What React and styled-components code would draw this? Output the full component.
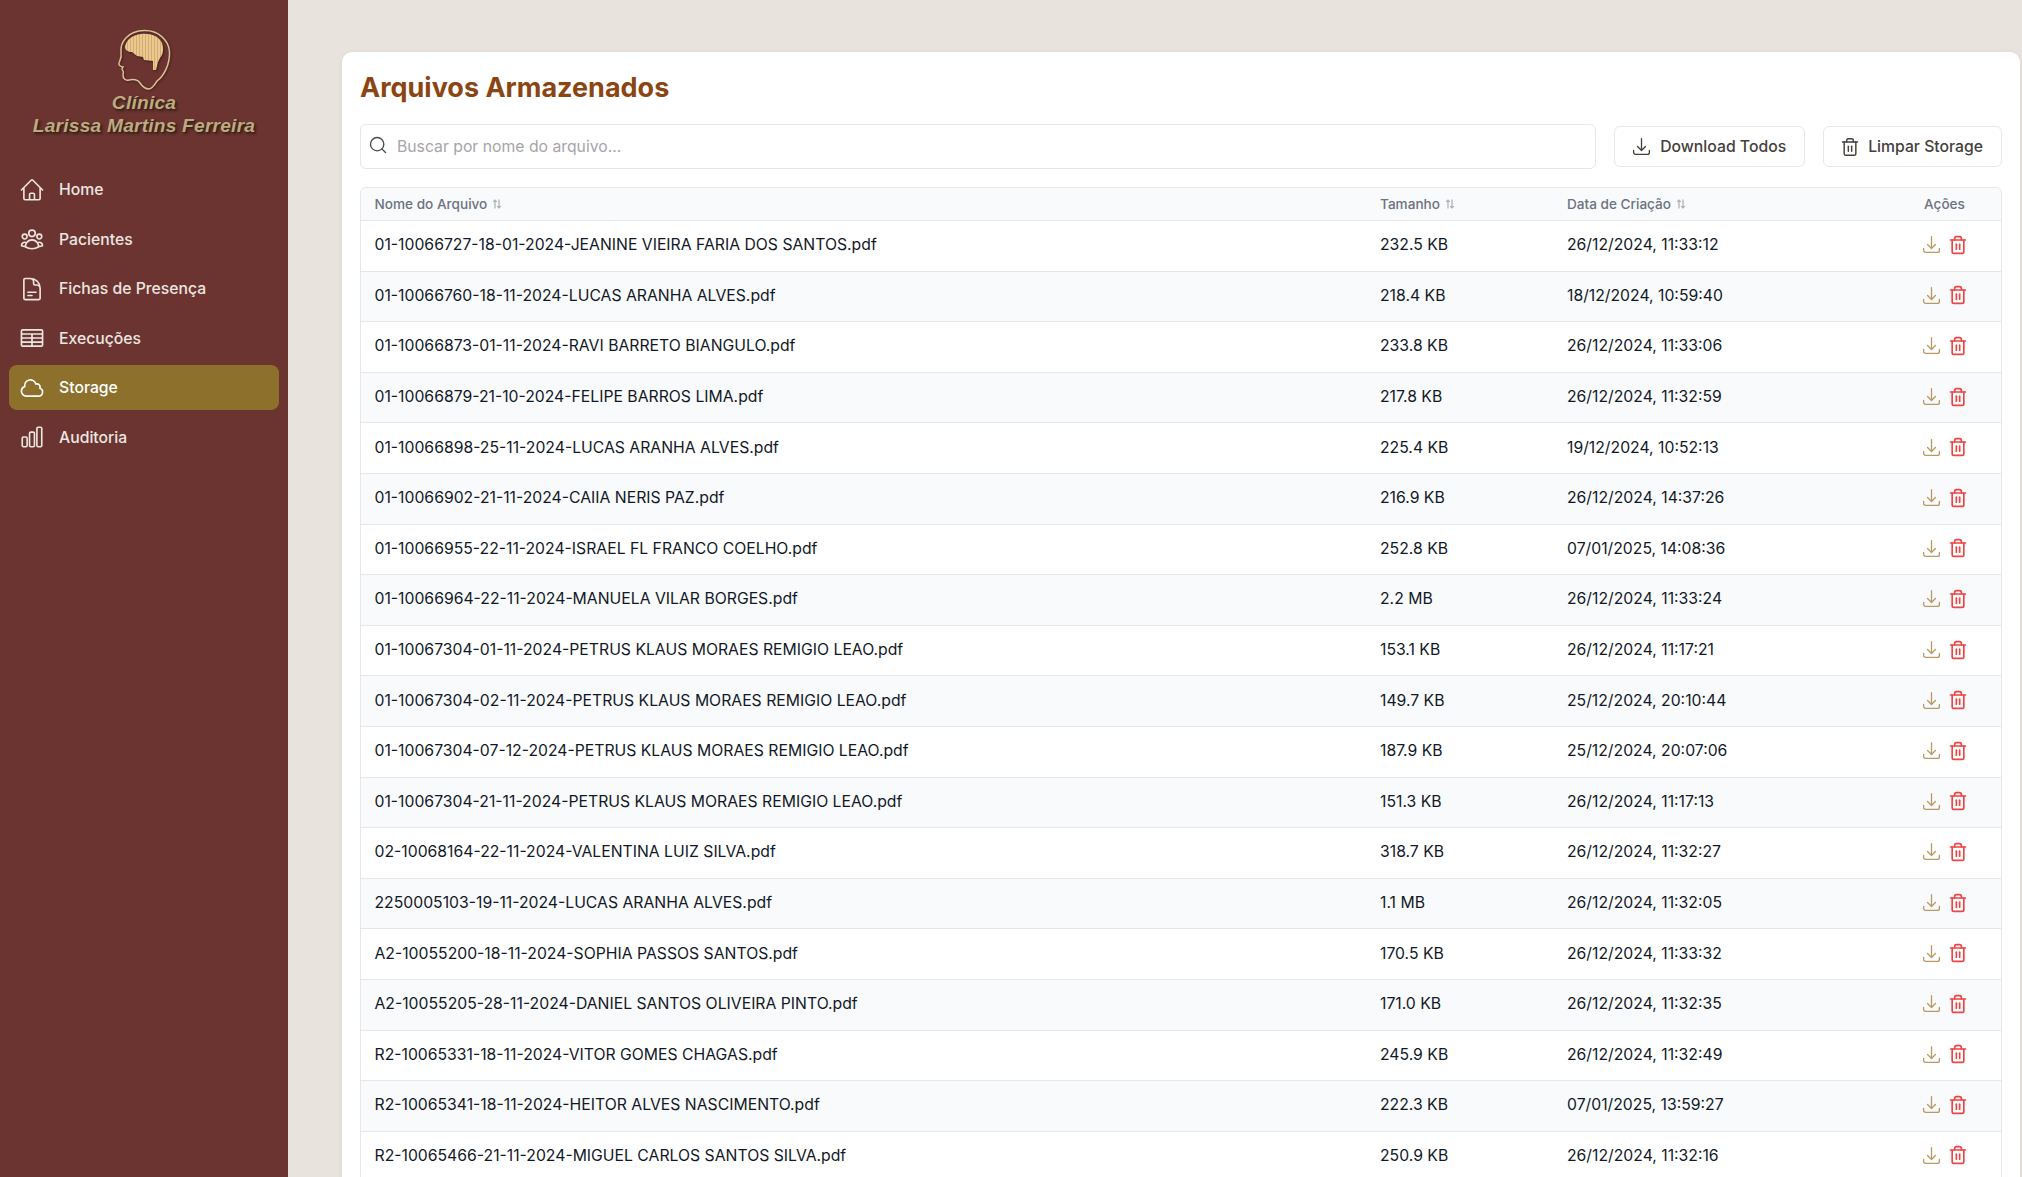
import React from 'react'
import styled, { createGlobalStyle } from 'styled-components'
import { Search, Trash2 } from 'lucide-react'
import {
  HiOutlineHome,
  HiOutlineUserGroup,
  HiOutlineDocumentText,
  HiOutlineTableCells,
  HiOutlineCloud,
  HiOutlineChartBar,
  HiOutlineArrowDownTray
} from 'react-icons/hi2'

const files = [
  ['01-10066727-18-01-2024-JEANINE VIEIRA FARIA DOS SANTOS.pdf', '232.5 KB', '26/12/2024, 11:33:12'],
  ['01-10066760-18-11-2024-LUCAS ARANHA ALVES.pdf', '218.4 KB', '18/12/2024, 10:59:40'],
  ['01-10066873-01-11-2024-RAVI BARRETO BIANGULO.pdf', '233.8 KB', '26/12/2024, 11:33:06'],
  ['01-10066879-21-10-2024-FELIPE BARROS LIMA.pdf', '217.8 KB', '26/12/2024, 11:32:59'],
  ['01-10066898-25-11-2024-LUCAS ARANHA ALVES.pdf', '225.4 KB', '19/12/2024, 10:52:13'],
  ['01-10066902-21-11-2024-CAIIA NERIS PAZ.pdf', '216.9 KB', '26/12/2024, 14:37:26'],
  ['01-10066955-22-11-2024-ISRAEL FL FRANCO COELHO.pdf', '252.8 KB', '07/01/2025, 14:08:36'],
  ['01-10066964-22-11-2024-MANUELA VILAR BORGES.pdf', '2.2 MB', '26/12/2024, 11:33:24'],
  ['01-10067304-01-11-2024-PETRUS KLAUS MORAES REMIGIO LEAO.pdf', '153.1 KB', '26/12/2024, 11:17:21'],
  ['01-10067304-02-11-2024-PETRUS KLAUS MORAES REMIGIO LEAO.pdf', '149.7 KB', '25/12/2024, 20:10:44'],
  ['01-10067304-07-12-2024-PETRUS KLAUS MORAES REMIGIO LEAO.pdf', '187.9 KB', '25/12/2024, 20:07:06'],
  ['01-10067304-21-11-2024-PETRUS KLAUS MORAES REMIGIO LEAO.pdf', '151.3 KB', '26/12/2024, 11:17:13'],
  ['02-10068164-22-11-2024-VALENTINA LUIZ SILVA.pdf', '318.7 KB', '26/12/2024, 11:32:27'],
  ['2250005103-19-11-2024-LUCAS ARANHA ALVES.pdf', '1.1 MB', '26/12/2024, 11:32:05'],
  ['A2-10055200-18-11-2024-SOPHIA PASSOS SANTOS.pdf', '170.5 KB', '26/12/2024, 11:33:32'],
  ['A2-10055205-28-11-2024-DANIEL SANTOS OLIVEIRA PINTO.pdf', '171.0 KB', '26/12/2024, 11:32:35'],
  ['R2-10065331-18-11-2024-VITOR GOMES CHAGAS.pdf', '245.9 KB', '26/12/2024, 11:32:49'],
  ['R2-10065341-18-11-2024-HEITOR ALVES NASCIMENTO.pdf', '222.3 KB', '07/01/2025, 13:59:27'],
  ['R2-10065466-21-11-2024-MIGUEL CARLOS SANTOS SILVA.pdf', '250.9 KB', '26/12/2024, 11:32:16']
]

const navItems = [
  { label: 'Home', Icon: HiOutlineHome },
  { label: 'Pacientes', Icon: HiOutlineUserGroup },
  { label: 'Fichas de Presença', Icon: HiOutlineDocumentText },
  { label: 'Execuções', Icon: HiOutlineTableCells },
  { label: 'Storage', Icon: HiOutlineCloud, active: true },
  { label: 'Auditoria', Icon: HiOutlineChartBar }
]

const GlobalStyle = createGlobalStyle`
  html, body {
    margin: 0;
    height: 100%;
    overflow: hidden;
    background: #e8e3dd;
    font-family: Inter, "Liberation Sans", sans-serif;
  }
  * { box-sizing: border-box; }
`

const Layout = styled.div`
  display: flex;
  height: 1177px;
  overflow: hidden;
`
const Sidebar = styled.aside`
  width: 288px;
  flex-shrink: 0;
  background: #6b3430;
  padding-top: 27px;
`
const LogoBlock = styled.div`
  display: flex;
  flex-direction: column;
  align-items: center;
  height: 115px;
`
const LogoMark = styled.svg`
  display: block;
  flex-shrink: 0;
  filter: drop-shadow(1px 1px 1px rgba(45, 20, 15, 0.7));
`
const LogoText = styled.div`
  font-family: "Liberation Sans", sans-serif;
  font-style: italic;
  font-weight: 700;
  font-size: 19.2px;
  line-height: 23px;
  letter-spacing: 0.2px;
  color: #bfa981;
  text-align: center;
  text-shadow: 1px 1px 1px #35261a, 2px 2px 3px rgba(40, 20, 10, 0.7);
  white-space: nowrap;
  margin-top: -1.5px;
`
const Nav = styled.nav`
  display: flex;
  flex-direction: column;
  gap: 4.6px;
  padding: 25px 9px 0;
`
const NavItem = styled.a`
  display: flex;
  align-items: center;
  gap: 14.5px;
  height: 45px;
  padding: 0 9.5px;
  border-radius: 8px;
  font-size: 15.75px;
  font-weight: 500;
  color: ${({ $active }) => ($active ? '#ffffff' : '#ece6e0')};
  background: ${({ $active }) => ($active ? '#8d702c' : 'transparent')};
  svg {
    width: 26px;
    height: 26px;
    flex-shrink: 0;
  }
`
const Main = styled.main`
  flex: 1;
  min-width: 0;
  padding: 52px 2px 0 54px;
`
const Card = styled.section`
  background: #fff;
  border-radius: 10px 10px 0 0;
  padding: 19px 18px 0;
  box-shadow: 0 1px 6px rgba(0, 0, 0, 0.06);
`
const Title = styled.h1`
  margin: 0;
  font-size: 27px;
  line-height: 34px;
  font-weight: 700;
  color: #8b4513;
`
const Toolbar = styled.div`
  display: flex;
  align-items: center;
  gap: 18px;
  margin-top: 19px;
`
const SearchBox = styled.div`
  flex: 1;
  display: flex;
  align-items: center;
  gap: 9px;
  height: 45px;
  padding: 0 7px;
  border: 1px solid #e5e7eb;
  border-radius: 6px;
  font-size: 15.75px;
  color: #a8a4a8;
  svg {
    width: 20px;
    height: 20px;
    color: #4a4a4a;
    stroke-width: 1.6;
    margin-top: -4px;
  }
`
const ToolButton = styled.button`
  display: flex;
  align-items: center;
  justify-content: center;
  gap: 8px;
  height: 41px;
  padding: 0 18px 0 16px;
  background: #fff;
  border: 1px solid #e5e7eb;
  border-radius: 6px;
  font-family: inherit;
  font-size: 15.75px;
  font-weight: 500;
  color: #44403c;
  svg {
    width: 21px;
    height: 21px;
    flex-shrink: 0;
  }
`
const Table = styled.div`
  margin-top: 18px;
  border: 1px solid #e5e7eb;
  border-bottom: 0;
  border-radius: 6px 6px 0 0;
`
const gridColumns = '1fr 187px 357px 77px'
const HeaderRow = styled.div`
  display: grid;
  grid-template-columns: ${gridColumns};
  align-items: center;
  height: 33px;
  padding-left: 13.5px;
  background: #f9fafb;
  border-bottom: 1px solid #e5e7eb;
  border-radius: 6px 6px 0 0;
  font-size: 13.6px;
  font-weight: 500;
  color: #6b7280;
`
const HeaderCell = styled.div`
  display: flex;
  align-items: center;
  gap: 5px;
`
const SortMark = styled.svg`
  width: 10px;
  height: 10px;
  color: #a9aeb6;
`
const Row = styled.div`
  display: grid;
  grid-template-columns: ${gridColumns};
  align-items: center;
  height: 50.6px;
  padding: 0 0 2px 13.5px;
  background: ${({ $odd }) => ($odd ? '#f9fafb' : '#fff')};
  border-bottom: 1px solid #e5e7eb;
  font-size: 15.75px;
  color: #111827;
`
const Actions = styled.div`
  display: flex;
  align-items: center;
  gap: 6px;
  margin-left: -3.5px;
`
const IconAction = styled.span`
  display: flex;
  color: ${({ $danger }) => ($danger ? '#ef4444' : '#b89a62')};
  svg {
    width: ${({ $danger }) => ($danger ? '20px' : '21px')};
    height: ${({ $danger }) => ($danger ? '20px' : '21px')};
  }
`

const BrainLogo = () => (
  <LogoMark width="56" height="65" viewBox="118 27 56 65" fill="none">
    <defs>
      <pattern id="brainStripes" width="3" height="4" patternUnits="userSpaceOnUse">
        <rect width="3" height="4" fill="#e9c98f" />
        <rect width="1" height="4" fill="#d4ab70" />
      </pattern>
    </defs>
    <path
      d="M131 80 C127 81 125 78 125 75 C125 73 126 72 125 71 L124 69 L125 67 C123 67 120 65 121 63 C122 60 124 58 123 52 C122 42 130 31 146 30.5 C160 30 171 40 171.5 52 C172 64 166 76 159 81 C157 84 155 88 151 89 C147 89 144 86 142 83 C140 80 136 79 131 80 Z"
      stroke="#dcc09a"
      strokeWidth="1.5"
    />
    <path
      d="M127 47 C128 40 134 35 143 34 C152 33 161 36 164 43 C166 49 165 55 162 58 L160 62 L158 70 L155 70 L155 61 L146 60 L145 57 L139 56 L134 52 C130 52 127 50 127 47 Z"
      fill="url(#brainStripes)"
    />
  </LogoMark>
)

// Setinhas de ordenacao do cabecalho
const SortIcon = () => (
  <SortMark viewBox="0 0 10 10" fill="none" stroke="currentColor" strokeWidth="1.2">
    <path d="M3 9.5V1M1.2 2.8L3 1l1.8 1.8" />
    <path d="M7 .5V9M5.2 7.2L7 9l1.8-1.8" />
  </SortMark>
)

const App = () => (
  <Layout>
    <GlobalStyle />
    <Sidebar>
      <LogoBlock>
        <BrainLogo />
        <LogoText>
          Clínica
          <br />
          Larissa Martins Ferreira
        </LogoText>
      </LogoBlock>
      <Nav>
        {navItems.map(({ label, Icon, active }) => (
          <NavItem key={label} $active={active}>
            <Icon />
            {label}
          </NavItem>
        ))}
      </Nav>
    </Sidebar>
    <Main>
      <Card>
        <Title>Arquivos Armazenados</Title>
        <Toolbar>
          <SearchBox>
            <Search />
            Buscar por nome do arquivo...
          </SearchBox>
          <ToolButton>
            <HiOutlineArrowDownTray />
            Download Todos
          </ToolButton>
          <ToolButton>
            <Trash2 style={{ width: 20, height: 20, strokeWidth: 1.75 }} />
            Limpar Storage
          </ToolButton>
        </Toolbar>
        <Table>
          <HeaderRow>
            <HeaderCell>
              Nome do Arquivo <SortIcon />
            </HeaderCell>
            <HeaderCell>
              Tamanho <SortIcon />
            </HeaderCell>
            <HeaderCell>
              Data de Criação <SortIcon />
            </HeaderCell>
            <HeaderCell>Ações</HeaderCell>
          </HeaderRow>
          {files.map(([name, size, date], i) => (
            <Row key={name} $odd={i % 2 === 1}>
              <div>{name}</div>
              <div>{size}</div>
              <div>{date}</div>
              <Actions>
                <IconAction>
                  <HiOutlineArrowDownTray />
                </IconAction>
                <IconAction $danger>
                  <Trash2 />
                </IconAction>
              </Actions>
            </Row>
          ))}
        </Table>
      </Card>
    </Main>
  </Layout>
)

export default App
